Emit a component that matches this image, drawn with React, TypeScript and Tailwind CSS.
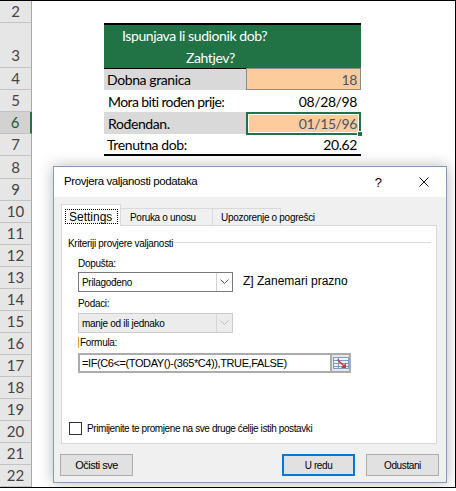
import React from 'react';

const ROWS = [
  { n: 2, h: 'h-[22px]' },
  { n: 3, h: 'h-[45px]' },
  { n: 4, h: 'h-[22px]' },
  { n: 5, h: 'h-[22px]' },
  { n: 6, h: 'h-[22px]' },
  { n: 7, h: 'h-[22px]' },
  { n: 8, h: 'h-[23px]' },
  { n: 9, h: 'h-[22px]' },
  { n: 10, h: 'h-[22px]' },
  { n: 11, h: 'h-[22px]' },
  { n: 12, h: 'h-[22px]' },
  { n: 13, h: 'h-[22px]' },
  { n: 14, h: 'h-[22px]' },
  { n: 15, h: 'h-[22px]' },
  { n: 16, h: 'h-[22px]' },
  { n: 17, h: 'h-[22px]' },
  { n: 18, h: 'h-[22px]' },
  { n: 19, h: 'h-[22px]' },
  { n: 20, h: 'h-[22px]' },
  { n: 21, h: 'h-[22px]' },
  { n: 22, h: 'h-[22px]' },
];

const Chevron = ({ color }: { color: string }) => (
  <svg width="9" height="6" viewBox="0 0 9 6">
    <path d="M0.5 0.5 L4.5 4.5 L8.5 0.5" fill="none" stroke={color} strokeWidth="1" />
  </svg>
);

const RangeIcon = () => (
  <svg width="16" height="14" viewBox="0 0 16 14">
    <rect x="0.5" y="1.5" width="15" height="11" fill="#eef3fa" stroke="#7d9cc6" />
    <line x1="0.5" y1="4.5" x2="15.5" y2="4.5" stroke="#7d9cc6" />
    <line x1="0.5" y1="7.5" x2="15.5" y2="7.5" stroke="#7d9cc6" />
    <line x1="0.5" y1="10.5" x2="15.5" y2="10.5" stroke="#7d9cc6" />
    <line x1="5.5" y1="1.5" x2="5.5" y2="12.5" stroke="#7d9cc6" />
    <path d="M5 3 L11 9 L13 7 L13 12 L8 12 L10 10 L4 4 Z" fill="#d8352a" />
  </svg>
);

export default function App() {
  return (
    <div className="relative w-[456px] h-[488px] bg-white border-t border-r border-b border-black overflow-hidden flex">
      {/* row headers */}
      <div className="w-[32px] flex flex-col bg-[#e6e6e6] font-[Lato,sans-serif] text-[15px] text-[#444]">
        {ROWS.map((r) =>
          r.n === 6 ? (
            <div key={r.n} className={`${r.h} flex items-center justify-center bg-[#d2d2d2] border-b border-[#c2c2c2] border-r-2 border-r-[#217346] text-[#1f5b37]`}>
              {r.n}
            </div>
          ) : r.n === 3 ? (
            <div key={r.n} className={`${r.h} flex items-end justify-center pb-[1px] border-b border-[#c2c2c2] border-r border-r-[#a8a8a8]`}>
              {r.n}
            </div>
          ) : (
            <div key={r.n} className={`${r.h} flex items-center justify-center border-b border-[#c2c2c2] border-r border-r-[#a8a8a8]`}>
              {r.n}
            </div>
          )
        )}
      </div>

      {/* sheet */}
      <div className="flex-1 flex flex-col font-[Lato,sans-serif] text-[14px] tracking-[-0.4px] text-black whitespace-nowrap">
        <div className="h-[22px]" />
        <div className="h-[45px] flex">
          <div className="w-[72px]" />
          <div className="w-[257px] bg-[#217346] border-t-2 border-black text-white leading-[22px]">
            <div className="pl-[18px]">Ispunjava li sudionik dob?</div>
            <div className="pl-[82px]">Zahtjev?</div>
          </div>
        </div>
        <div className="h-[22px] flex">
          <div className="w-[72px]" />
          <div className="w-[142px] bg-[#d9d9d9] border-t border-black flex items-center pl-[3px]">Dobna granica</div>
          <div className="w-[115px] bg-[#fccc9d] border border-[#8a8a8a] flex items-center justify-end pr-[3px] text-[#44546a]">18</div>
        </div>
        <div className="h-[22px] flex">
          <div className="w-[72px]" />
          <div className="w-[142px] flex items-center pl-[4px] tracking-[-0.6px]">Mora biti rođen prije:</div>
          <div className="w-[115px] flex items-center justify-end pr-[4px]">08/28/98</div>
        </div>
        <div className="h-[22px] flex">
          <div className="w-[72px]" />
          <div className="w-[142px] bg-[#d9d9d9] flex items-center pl-[4px]">Rođendan.</div>
          <div className="relative w-[115px] h-[23px] border-2 border-[#217346]">
            <div className="h-full border border-white bg-[#fccc9d] flex items-center justify-end pr-[1px] text-[#44546a]">01/15/96</div>
            <div className="absolute right-[-4px] bottom-[-4px] w-[6px] h-[6px] bg-[#217346] border border-white" />
          </div>
        </div>
        <div className="h-[22px] flex">
          <div className="w-[72px]" />
          <div className="w-[257px] flex border-b-2 border-black">
            <div className="w-[142px] flex items-center pl-[3px]">Trenutna dob:</div>
            <div className="w-[115px] flex items-center justify-end pr-[4px]">20.62</div>
          </div>
        </div>
      </div>

      {/* dialog */}
      <div className="absolute left-[53px] top-[165px] w-[394px] h-[317px] border border-[#7f9cb8] bg-[#f0f0f0] shadow-[0_0_14px_rgba(0,0,0,0.28)] flex flex-col font-['Liberation_Sans',sans-serif] text-black">
        <div className="h-[30px] bg-white flex items-center pl-[10px] pr-[17px]">
          <span className="text-[11.5px] tracking-[-0.4px]">Provjera valjanosti podataka</span>
          <span className="ml-auto text-[13px] leading-none">?</span>
          <svg className="ml-[37px]" width="10" height="10" viewBox="0 0 10 10">
            <path d="M0.5 0.5 L9.5 9.5 M9.5 0.5 L0.5 9.5" stroke="#111" strokeWidth="1" />
          </svg>
        </div>

        <div className="flex-1 flex flex-col px-[7px] pt-[7px]">
          {/* tabs */}
          <div className="h-[21px] flex items-end text-[10px] tracking-[-0.3px]">
            <div className="relative z-10 w-[60px] h-[22px] -mb-px bg-white border-t border-l border-r border-[#d9d9d9] pt-[4px] pl-[3px]">
              <div className="w-[53px] h-[15px] border border-dotted border-black flex items-center pl-[3px] text-[12px] tracking-normal leading-none">Settings</div>
            </div>
            <div className="w-[92px] h-[17px] border-t border-r border-[#d9d9d9] flex items-center pl-[9px] whitespace-nowrap">Poruka o unosu</div>
            <div className="w-[68px] h-[17px] border-t border-r border-[#d9d9d9] flex items-center pl-[8px] whitespace-nowrap overflow-visible">Upozorenje o pogrešci</div>
          </div>

          {/* panel */}
          <div className="w-[376px] h-[219px] bg-white border border-[#d9d9d9] flex flex-col text-[10px] tracking-[-0.3px]">
            <div className="mt-[10px] h-[14px] flex items-center pl-[6px] pr-[5px]">
              <span className="whitespace-nowrap">Kriteriji provjere valjanosti</span>
              <div className="flex-1 h-px bg-[#dcdcdc] mt-[-2px]" />
            </div>
            <div className="pl-[16px] flex flex-col">
              <div className="mt-[6px] h-[14px] flex items-center">Dopušta:</div>
              <div className="mt-[2px] h-[20px] flex items-center">
                <div className="w-[155px] h-[20px] border border-[#7a7a7a] bg-white flex">
                  <div className="flex-1 flex items-center pl-[3px]">Prilagođeno</div>
                  <div className="w-[16px] border-l border-[#cfcfcf] flex items-center justify-center">
                    <Chevron color="#555" />
                  </div>
                </div>
                <span className="ml-[10px] mt-[-3px] text-[12px] tracking-normal whitespace-nowrap">Z] Zanemari prazno</span>
              </div>
              <div className="mt-[4px] h-[14px] flex items-center">Podaci:</div>
              <div className="mt-[3px] w-[155px] h-[20px] border border-[#cccccc] bg-[#ececec] flex">
                <div className="flex-1 flex items-center pl-[3px]">manje od ili jednako</div>
                <div className="w-[16px] border-l border-[#d6d6d6] flex items-center justify-center">
                  <Chevron color="#bdbdbd" />
                </div>
              </div>
              <div className="mt-[2px] h-[14px] flex items-center">
                <span className="w-px h-[11px] bg-[#e09a3c] mr-[1px]" />
                Formula:
              </div>
              <div className="mt-[4px] w-[273px] h-[20px] border-2 border-[#ababab] bg-white flex">
                <div className="flex-1 flex items-center pl-[2px] text-[11px] tracking-[-0.4px] whitespace-nowrap overflow-hidden">=IF(C6&lt;=(TODAY()-(365*C4)),TRUE,FALSE)</div>
                <div className="w-[19px] bg-[#e6e6e6] border-l-2 border-[#ababab] flex items-center justify-center">
                  <RangeIcon />
                </div>
              </div>
            </div>
            <div className="mt-[48px] pl-[7px] flex items-center">
              <div className="w-[13px] h-[13px] border border-[#333] bg-white" />
              <span className="ml-[5px] whitespace-nowrap tracking-[-0.4px]">Primijenite te promjene na sve druge ćelije istih postavki</span>
            </div>
          </div>

          {/* buttons */}
          <div className="mt-[10px] flex">
            <button className="-ml-px w-[73px] h-[22px] bg-[#e1e1e1] border border-[#adadad] text-[11px] tracking-[-0.5px]">Očisti sve</button>
            <button className="ml-auto w-[73px] h-[22px] bg-[#e1e1e1] border-2 border-[#0078d7] text-[10px] tracking-[-0.4px]">U redu</button>
            <button className="ml-[11px] w-[73px] h-[22px] bg-[#e1e1e1] border border-[#adadad] text-[10px] tracking-[-0.4px]">Odustani</button>
          </div>
        </div>
      </div>
    </div>
  );
}
